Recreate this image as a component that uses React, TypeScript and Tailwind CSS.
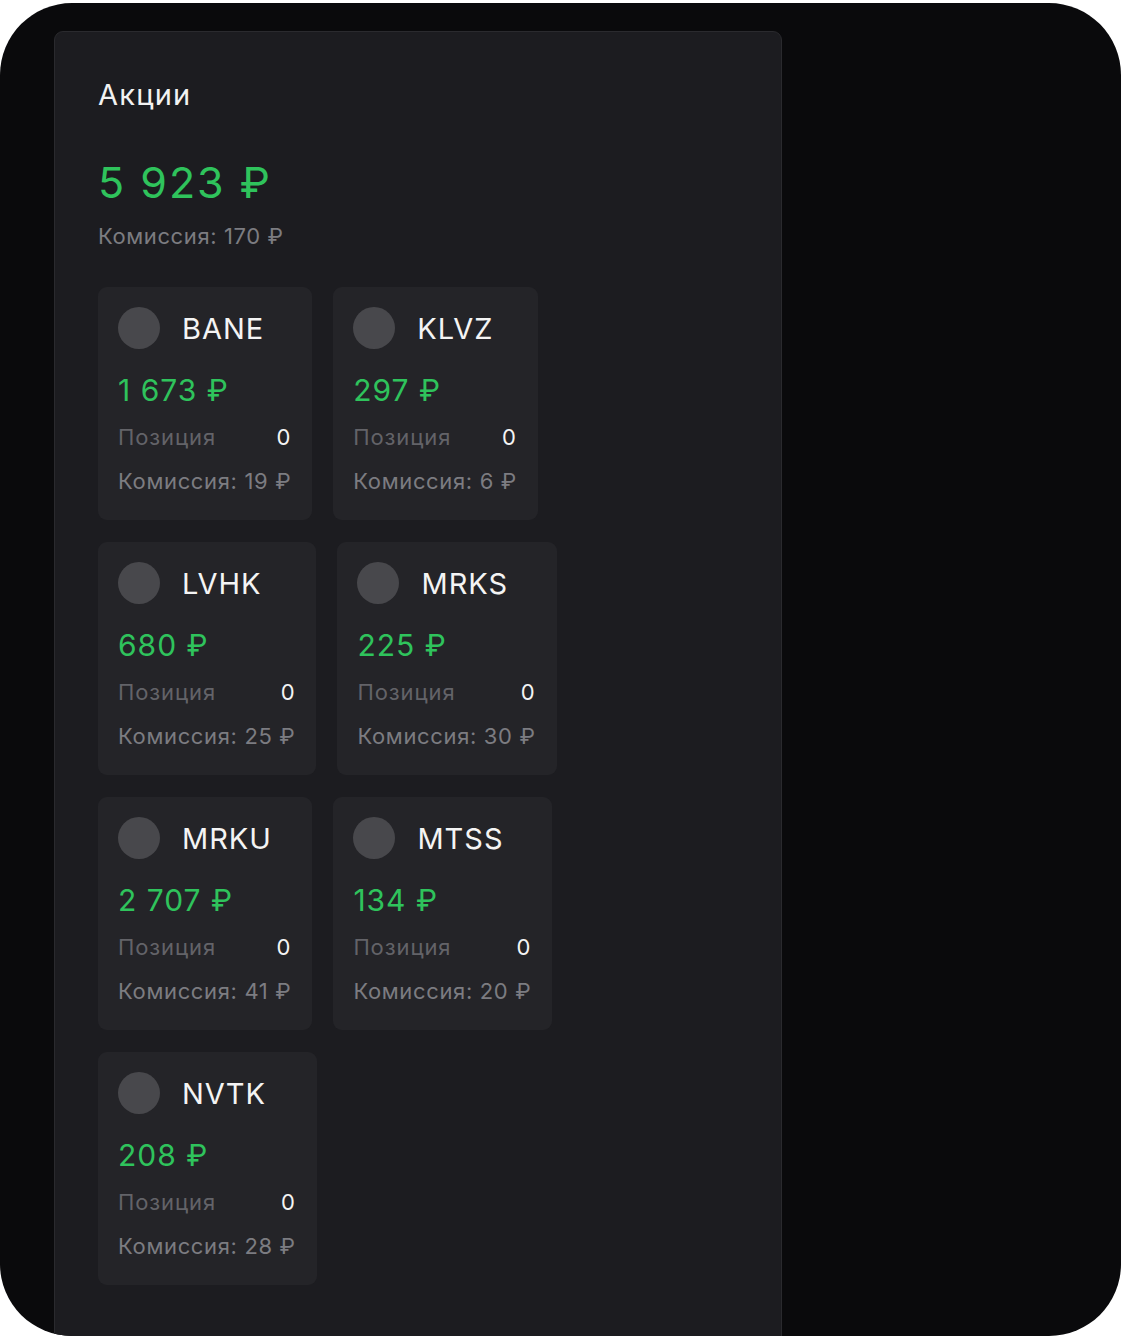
import React from "react";

const items = [
  { t: "BANE", p: "1 673 ₽", c: "19 ₽" },
  { t: "KLVZ", p: "297 ₽", c: "6 ₽" },
  { t: "LVHK", p: "680 ₽", c: "25 ₽" },
  { t: "MRKS", p: "225 ₽", c: "30 ₽" },
  { t: "MRKU", p: "2 707 ₽", c: "41 ₽" },
  { t: "MTSS", p: "134 ₽", c: "20 ₽" },
  { t: "NVTK", p: "208 ₽", c: "28 ₽" },
];

function Card({ t, p, c }: { t: string; p: string; c: string }) {
  return (
    <div className="flex flex-col rounded-[9px] bg-[#242428] pl-5 pr-[21px] pt-5 pb-6">
      <div className="flex h-[42px] items-center">
        <div className="h-[42px] w-[42px] rounded-full bg-[#48484c]" />
        <div className="ml-[22px] text-[29px] leading-none tracking-[1px] text-[#f4f4f4]">{t}</div>
      </div>
      <div className="mt-[23px] text-[30px] leading-[36px] tracking-[1px] text-[#2fc35c]">{p}</div>
      <div className="mt-[14px] flex items-center justify-between text-[22px] leading-[30px] tracking-[0.9px]">
        <span className="text-[#636368]">Позиция</span>
        <span className="text-[#f4f4f4]">0</span>
      </div>
      <div className="mt-[14px] whitespace-nowrap text-[22px] leading-[30px] tracking-[0.65px] text-[#7c7c81]">
        Комиссия: {c}
      </div>
    </div>
  );
}

export default function App() {
  const rows = [items.slice(0, 2), items.slice(2, 4), items.slice(4, 6), items.slice(6, 7)];
  return (
    <div
      className="h-[1336px] w-[1121px] overflow-hidden bg-white pt-[3px]"
      style={{ fontFamily: "Inter, 'Noto Sans', sans-serif" }}
    >
      <div className="h-[1333px] w-[1121px] overflow-hidden rounded-[72px] bg-[#0a0a0c] pl-[54px] pt-[28px]">
        <div className="h-[1400px] w-[728px] rounded-[9px] border border-[#2a2a2e] bg-[#1c1c20] pl-[43px] pt-[46px]">
          <div className="text-[29px] leading-[34px] tracking-[1.2px] text-[#f2f2f2]">Акции</div>
          <div className="mt-[45px] text-[43px] leading-[50px] tracking-[2px] text-[#2fc35c]">5 923 ₽</div>
          <div className="mt-[15px] text-[22px] leading-[28px] tracking-[0.6px] text-[#7c7c81]">Комиссия: 170 ₽</div>
          <div className="mt-[37px] flex flex-col gap-[22px]">
            {rows.map((r, i) => (
              <div key={i} className="flex items-start gap-[21px]">
                {r.map((it) => (
                  <Card key={it.t} {...it} />
                ))}
              </div>
            ))}
          </div>
        </div>
      </div>
    </div>
  );
}
